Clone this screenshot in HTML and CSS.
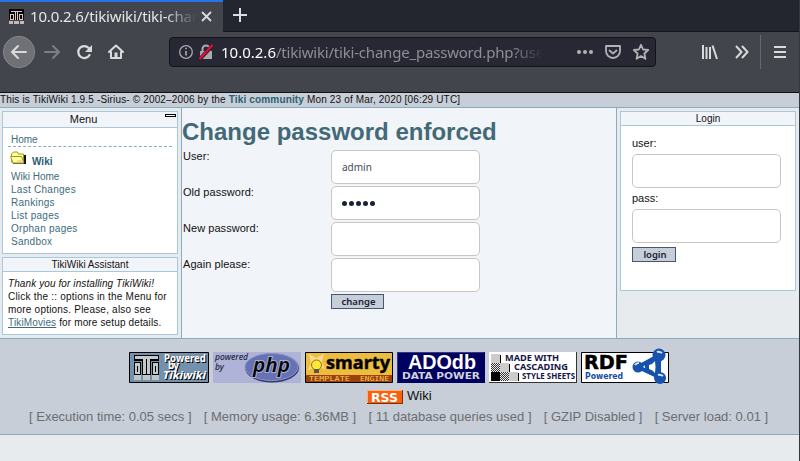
FILE: index.html
```html
<!DOCTYPE html>
<html lang="en">
<head>
<meta charset="utf-8">
<title>Change password</title>
<link rel="stylesheet" href="styles.css">
</head>
<body>
<div class="window">
  <div class="tabs">
    <div class="tab">
      <svg class="favicon" width="15" height="15" viewBox="0 0 15 15" shape-rendering="crispEdges"><path fill="#08080b" d="M0 0h15v11H0z"/><path fill="#dac7cb" d="M2 2h11v1H2zM6 3h1v8H6zM8 3h1v8H8zM1 5h4v6H1zM10 5h4v6h-4z"/><path fill="#08080b" d="M2 6h2v4H2zM11 6h2v4h-2z"/><path fill="#c9b5ba" d="M0 12h4v3H0zM5 12h5v3H5zM11 12h4v3h-4z"/></svg>
      <span class="tab-title">10.0.2.6/tikiwiki/tiki-chan</span>
      <svg class="close" width="11" height="11" viewBox="0 0 11 11"><path d="M1 1l9 9M10 1l-9 9"/></svg>
    </div>
    <svg class="plus" width="14" height="14" viewBox="0 0 14 14"><path d="M7 0v14M0 7h14"/></svg>
  </div>
  <div class="toolbar">
    <svg class="nav-icons" width="130" height="34" viewBox="0 0 130 34" fill="none" stroke="#dadadb" stroke-width="2" stroke-linecap="round" stroke-linejoin="round">
      <circle cx="19" cy="17" r="15.700" fill="#707176" stroke="#85868a" stroke-width="1"/>
      <path d="M26 17H12M18 11l-6 6 6 6"/>
      <path stroke="#7d7f83" d="M45 17h14M53 11l6 6-6 6"/>
      <path stroke-width="2.300" d="M89.500 20a6 6 0 1 1-.800-7"/><path fill="#dadadb" stroke="none" d="M92 10v7h-7z"/>
      <path d="M109 17l7-6.500 7 6.500M111 17v6h10v-6"/><path stroke-width="3" stroke-linecap="butt" d="M116 17.500v4.500"/>
    </svg>
    <div class="address">
      <svg width="34" height="18" viewBox="0 0 34 18" fill="none"><circle cx="7" cy="9" r="6.300" stroke="#a9aaae" stroke-width="1.300"/><path stroke="#a9aaae" stroke-width="1.700" d="M7 8v4.500M7 4.700v1.600"/><path fill="#a9aaae" d="M21 8h12v8H21z"/><path stroke="#a9aaae" stroke-width="2" d="M23.500 8V6a3.500 3.500 0 0 1 7 0v2"/><path stroke="#272833" stroke-width="4" d="M20 17L34 2"/><path stroke="#f4063e" stroke-width="2" d="M20.500 16L33.500 2"/></svg>
      <span class="url"><b>10.0.2.6</b>/tikiwiki/tiki-change_password.php?user</span>
      <svg class="page-actions" width="74" height="18" viewBox="0 0 74 18" fill="none" stroke="#b1b2b6" stroke-width="1.800" stroke-linejoin="round" stroke-linecap="round"><g fill="#b1b2b6" stroke="none"><circle cx="3" cy="9" r="2"/><circle cx="9" cy="9" r="2"/><circle cx="15" cy="9" r="2"/></g><path d="M30 3h14v5a7 7 0 0 1-14 0zM33.500 7.500l3.500 3 3.500-3"/><path d="M65 1.800l2.100 4.700 5.100.5-3.800 3.500 1 5.300-4.400-2.700-4.400 2.700 1-5.300L57.800 7l5.100-.5z"/></svg>
    </div>
    <svg class="tools" width="90" height="34" viewBox="0 0 90 34" fill="none" stroke="#dadadb" stroke-width="2"><path d="M3 10v14M6.500 12v12M10 12v12M12.500 10.500L17 24"/><path d="M36 11l5.500 6-5.500 6M42 11l5.500 6-5.500 6"/><path stroke="#67696e" stroke-width="1" d="M60.500 0v34"/><path d="M74 12h12M74 17h12M74 22h12"/></svg>
  </div>
  <div class="topline"><span>This is TikiWiki 1.9.5 -Sirius- © 2002–2006 by the <a>Tiki community</a> Mon 23 of Mar, 2020 [06:29 UTC]</span></div>
  <div class="columns">
    <aside class="left">
      <section class="box menu">
        <h3>Menu<i class="toggle"></i></h3>
        <a class="home">Home</a>
        <div class="section-title"><svg width="17" height="14" viewBox="0 0 17 14"><path fill="#111" d="M14 4h2v9H3v-1h11z"/><path fill="#ffff9a" stroke="#9b9b14" d="M1.500 11V3l2-2h4l1 2h5v9H3z"/><path fill="#ffffa8" stroke="#9b9b14" d="M.5 5.500h11l2.500 6.500H3z"/><path fill="#f2d69b" d="M8 9h4l1 2H6z"/></svg><b>Wiki</b></div>
        <nav><a>Wiki Home</a><a>Last Changes</a><a>Rankings</a><a>List pages</a><a>Orphan pages</a><a>Sandbox</a></nav>
      </section>
      <section class="box assistant">
        <h3>TikiWiki Assistant</h3>
        <p><em>Thank you for installing TikiWiki!</em><br><span>Click the :: options in the Menu for</span><br><span>more options. Please, also see</span><br><span class="last"><u>TikiMovies</u> for more setup details.</span></p>
      </section>
    </aside>
    <main>
      <h1>Change password enforced</h1>
      <div class="row"><label>User:</label><div class="field">admin</div></div>
      <div class="row"><label>Old password:</label><div class="field dots"><i></i><i></i><i></i><i></i><i></i></div></div>
      <div class="row"><label>New password:</label><div class="field"></div></div>
      <div class="row"><label>Again please:</label><div class="field"></div></div>
      <button class="change">change</button>
    </main>
    <aside class="right">
      <section class="box login">
        <h3>Login</h3>
        <form><label>user:</label><div class="field"></div><label>pass:</label><div class="field"></div><button type="button">login</button></form>
      </section>
    </aside>
  </div>
  <footer>
    <div class="badges">
      <svg width="80" height="38" viewBox="0 0 80 38"><path fill="#7390ac" stroke="#000" d="M.5 4.500h79v30H.5z"/><path fill="#bfc6c9" d="M5 27h7v5H5zM14 27h7v5h-7zM23 27h7v5h-7z"/><g shape-rendering="crispEdges"><path d="M5 7h25v6H5zM5 14h7v13H5zM23 14h7v13h-7zM13 7h9v20h-9z"/><path fill="#c4caca" d="M6 8h23v3H6zM14 10h3v16h-3zM18 10h3v16h-3zM6 15h5v11H6zM24 15h5v11h-5z"/><path d="M8 18h1v6H8zM26 18h1v6h-1z"/></g><g class="powered"><text x="35" y="14" textLength="42" lengthAdjust="spacingAndGlyphs">Powered</text><text x="39" y="21" textLength="11">by</text><text class="tiki" x="34" y="31" textLength="43" lengthAdjust="spacingAndGlyphs">Tikiwiki</text></g></svg>
      <svg width="88" height="38" viewBox="0 0 88 38"><path fill="#afb3d7" d="M0 4h88v31H0z"/><ellipse cx="59" cy="20" rx="27" ry="14.500" fill="#343b6d"/><ellipse cx="58.500" cy="19" rx="26.500" ry="13.500" fill="#6672b3" stroke="#8e97c9"/><g class="php-text"><text x="2" y="12" textLength="33" lengthAdjust="spacingAndGlyphs">powered</text><text x="2" y="22">by</text><text class="php" x="40" y="24" textLength="37" lengthAdjust="spacingAndGlyphs">php</text></g></svg>
      <svg width="88" height="38" viewBox="0 0 88 38"><path fill="#edbd3f" stroke="#000" d="M.5 4.500h87v30H.5z"/><path fill="#f8dc8b" d="M4 6l7 4 8-4-2 8 3 7-8-2-9 3 3-7z"/><path fill="#9e3f10" d="M1 27h86v7H1z"/><circle cx="11.500" cy="17" r="5" fill="#ffe735" stroke="#9b6c0c"/><path fill="#555" d="M9 21h5v4H9z"/><text class="smarty" x="21" y="21" textLength="64" lengthAdjust="spacingAndGlyphs">smarty</text><g class="template"><text x="4" y="33" textLength="41" lengthAdjust="spacingAndGlyphs">TEMPLATE</text><text x="55" y="33" textLength="29" lengthAdjust="spacingAndGlyphs">ENGINE</text></g></svg>
      <svg width="88" height="38" viewBox="0 0 88 38"><path fill="#00005e" d="M0 4h88v31H0z"/><path stroke="#35358a" fill="none" d="M.5 34V4.500H87"/><text class="ado" x="11" y="21" textLength="68" lengthAdjust="spacingAndGlyphs">ADOdb</text><text class="power" x="5" y="31" textLength="78" lengthAdjust="spacingAndGlyphs">DATA POWER</text></svg>
      <svg width="88" height="38" viewBox="0 0 88 38"><defs><pattern id="check" width="2" height="2" patternUnits="userSpaceOnUse"><path fill="#eee" d="M0 0h2v2H0z"/><path fill="#333" d="M0 0h1v1H0zM1 1h1v1H1z"/></pattern></defs><path fill="#333" d="M0 4h88v31H0z"/><path fill="#fff" d="M0 4h87v30H0z"/><path fill="#ccc" d="M2 6h9v9H2zM11 15h9v9h-9zM20 24h9v9h-9z"/><path fill="url(#check)" d="M2 15h9v9H2zM11 24h9v9h-9z"/><path d="M2 24h9v9H2zM11 7h1v8h-1zM20 16h1v8h-1zM29 25h1v8h-1z"/><g class="css-text"><text x="16" y="13" textLength="54" lengthAdjust="spacingAndGlyphs">MADE WITH</text><text x="25" y="22" textLength="54" lengthAdjust="spacingAndGlyphs">CASCADING</text><text x="33" y="31" textLength="53" lengthAdjust="spacingAndGlyphs">STYLE SHEETS</text></g></svg>
      <svg width="88" height="38" viewBox="0 0 88 38"><path fill="#fff" stroke="#000" d="M.5 4.500h87v30H.5z"/><text class="rdf" x="3" y="21" textLength="44" lengthAdjust="spacingAndGlyphs">RDF</text><text class="rdf-sub" x="4" y="31" textLength="38" lengthAdjust="spacingAndGlyphs">Powered</text><path stroke="#1552ac" stroke-width="4" d="M57 19L77 8M57 19l21 10M78 8v22" fill="none"/><path fill="#1552ac" d="M64 15l13-5v18l-13-5z"/><path fill="#fff" d="M68 17q4-1 6-4 1 6 0 12-2-3-6-4z"/><g fill="#1652ae"><circle cx="57" cy="19" r="5.500"/><circle cx="78" cy="7" r="6.500"/><circle cx="79" cy="30" r="6"/></g><g stroke="#dce8f8" stroke-width="2" fill="none"><path d="M54 17q1-2 4-2M76 4q2-1 5 1M77 27q2-1 5 1"/></g></svg>
    </div>
    <div class="rss"><svg width="36" height="14" viewBox="0 0 36 14"><path fill="#f8600c" d="M0 0h36v14H0z"/><path fill="none" stroke="#ffb27b" d="M.5 14V.5H36"/><path fill="none" stroke="#812e05" d="M0 13.500h35.500V0"/><text x="4" y="11.500" textLength="27" lengthAdjust="spacingAndGlyphs">RSS</text></svg><span>Wiki</span></div>
    <div class="stats"><span>[ Execution time: 0.05 secs ]</span><span>[ Memory usage: 6.36MB ]</span><span>[ 11 database queries used ]</span><span>[ GZIP Disabled ]</span><span>[ Server load: 0.01 ]</span></div>
  </footer>
</div>
</body>
</html>
```
FILE: styles.css
```css
* { box-sizing: border-box; }
body { margin: 0; background: #e7ebee; font-family: "Liberation Sans", sans-serif; font-size: 11px; color: #111; }
.window { width: 800px; height: 461px; border-right: 1px solid #333840; overflow: hidden; }
svg { display: block; flex: none; overflow: visible; }
.tabs { display: flex; height: 32px; background: #23252f; border-bottom: 1px solid #15161d; }
.tab { display: flex; align-items: center; width: 223px; height: 32px; background: #42454b; border-top: 2px solid #2675ef; padding-left: 9px; flex: none; }
.favicon { margin-top: -1px; }
.tab-title { margin: -2px 0 0 6px; width: 167px; flex: none; white-space: nowrap; font: 15px/24px "Noto Sans", sans-serif; letter-spacing: -.15px; color: #e6e6e8; mask-image: linear-gradient(90deg, #000 135px, transparent 166px); }
.close { margin: -2px 0 0 4px; fill: none; stroke: #dcdcdd; stroke-width: 1.8; }
.plus { margin: 8px 0 0 10px; fill: none; stroke: #dcdcdd; stroke-width: 2; }
.toolbar { display: flex; height: 61px; padding-top: 3px; background: #42454b; border-bottom: 1px solid #101115; }
.nav-icons { margin-right: 39px; }
.address { display: flex; align-items: center; margin-top: 2px; width: 487px; height: 30px; border: 1px solid #121319; border-radius: 4px; background: #272833; padding-left: 9px; }
.url { width: 321px; margin-left: 8px; white-space: nowrap; font: 15px/24px "Noto Sans", sans-serif; letter-spacing: -.2px; color: #8e8f95; mask-image: linear-gradient(90deg, #000 290px, transparent 322px); }
.url b { font-weight: 400; letter-spacing: 0; color: #fbfbfc; }
.page-actions { margin-left: 34px; }
.tools { margin-left: 44px; }
.topline { height: 15px; background: #c7ced8; border-bottom: 1px solid #8bacbd; font-size: 10px; line-height: 13px; letter-spacing: .155px; white-space: nowrap; }
.topline a { color: #2c6071; font-weight: 700; }
.columns { display: flex; height: 230px; }
.left { width: 182px; border-right: 1px solid #8bacbd; padding: 3px 3px 0 2px; }
.right { width: 183px; border-left: 1px solid #8bacbd; padding: 3px 3px 0; }
.box { background: #fff; border: 1px solid #a9c9da; }
.box h3 { position: relative; margin: 0; height: 14px; border-bottom: 1px solid #a9c9da; background: #f1f5f9; font-size: 10px; line-height: 13px; text-align: center; font-weight: 400; }
.menu { width: 176px; height: 143px; }
.box.menu h3 { height: 16px; padding-right: 13px; font-size: 11px; line-height: 15px; }
.toggle { position: absolute; top: 2px; right: 1px; width: 11px; height: 3px; border: 1px solid #000; background: #fff; }
.home { display: block; margin: 6px 5px 0; padding-left: 3px; height: 13px; border-bottom: 1px dashed #8bacbd; font-size: 10px; line-height: 12px; color: #3d6b7b; }
.section-title { display: flex; margin: 4px 0 0 7px; height: 19px; }
.section-title b { margin: 4px 0 0 5px; color: #2c6071; font-size: 10px; line-height: 13px; }
nav { margin-left: 8px; }
nav a { display: block; height: 13px; font-size: 10px; line-height: 13px; letter-spacing: .27px; color: #3d6b7b; }
nav a:first-child { letter-spacing: 0; }
.assistant { width: 176px; height: 78px; margin-top: 3px; }
.assistant p { margin: 5px 0 0 5px; font-size: 10px; line-height: 13px; white-space: nowrap; }
.assistant em { letter-spacing: .1px; }
.assistant span { letter-spacing: .21px; }
.assistant .last { letter-spacing: .14px; }
.assistant u { color: #3d6b7b; }
main { width: 434px; background: #f1f5f9; }
h1 { margin: 0; height: 42px; padding-top: 8px; font-size: 24px; line-height: 31px; color: #436976; white-space: nowrap; }
.row { display: flex; height: 36px; }
.row label { width: 149px; padding-left: 1px; line-height: 13px; letter-spacing: .05px; }
.field { width: 149px; height: 34px; border: 1px solid #cac5c0; border-radius: 5px; background: #fff; padding-left: 10px; font: 10px/33px "Noto Sans", sans-serif; color: #454b55; }
.dots { display: flex; align-items: center; gap: 2px; }
.dots i { width: 5px; height: 5px; border-radius: 50%; background: #172334; }
button { display: block; height: 15px; padding: 0; border: 1px solid #465773; background: #c7ced8; font: 600 9.500px/12px "Noto Sans", sans-serif; color: #172334; }
.change { width: 53px; margin-left: 149px; padding-left: 2px; }
.login { width: 176px; height: 180px; }
.login form { padding: 10px 0 0 11px; }
.login label { display: block; height: 18px; line-height: 14px; }
.login .field + label { height: 21px; line-height: 21px; }
.login button { width: 44px; margin-top: 4px; padding-left: 2px; }
footer { height: 97px; background: #c7ced8; border-top: 1px solid #8bacbd; border-bottom: 1px solid #8bacbd; }
.badges { display: flex; gap: 4px; margin-left: 129px; padding-top: 9px; height: 50px; }
.powered { fill: #fff; text-shadow: 1px 1px #000; font: 700 10px "Noto Sans", sans-serif; }
.tiki { font-size: 11px; font-style: italic; }
.php-text { font: italic 500 8.500px "Noto Sans", sans-serif; fill: #22253a; }
.php { font: italic 600 20px "Noto Sans", sans-serif; paint-order: stroke; stroke: #a5add5; stroke-width: 2px; fill: #050505; }
.smarty { font: 700 18px "Noto Sans", sans-serif; stroke: #111; stroke-width: .5px; }
.template { font: 7px "DejaVu Sans Mono", monospace; fill: #f5cb50; }
.ado { font: 700 21px "Liberation Sans", sans-serif; fill: #fff; }
.power { font: 700 9px "DejaVu Sans", sans-serif; fill: #d2d3df; }
.css-text { font: 700 9px "Noto Sans", sans-serif; fill: #14154a; }
.rdf { font: 700 20px "DejaVu Sans", sans-serif; stroke: #000; stroke-width: .5px; }
.rdf-sub { font: 700 8px "DejaVu Sans", sans-serif; fill: #154ca5; }
.rss { display: flex; margin-left: 367px; height: 19px; font-size: 13px; line-height: 14px; }
.rss svg { margin-top: 1px; }
.rss span { margin-left: 4px; }
.rss text { font: 700 12px "DejaVu Sans", sans-serif; fill: #fff; }
.stats { display: flex; margin-left: 29px; gap: 12.200px; color: #6c6d70; font-size: 13px; line-height: 17px; white-space: nowrap; }
```
